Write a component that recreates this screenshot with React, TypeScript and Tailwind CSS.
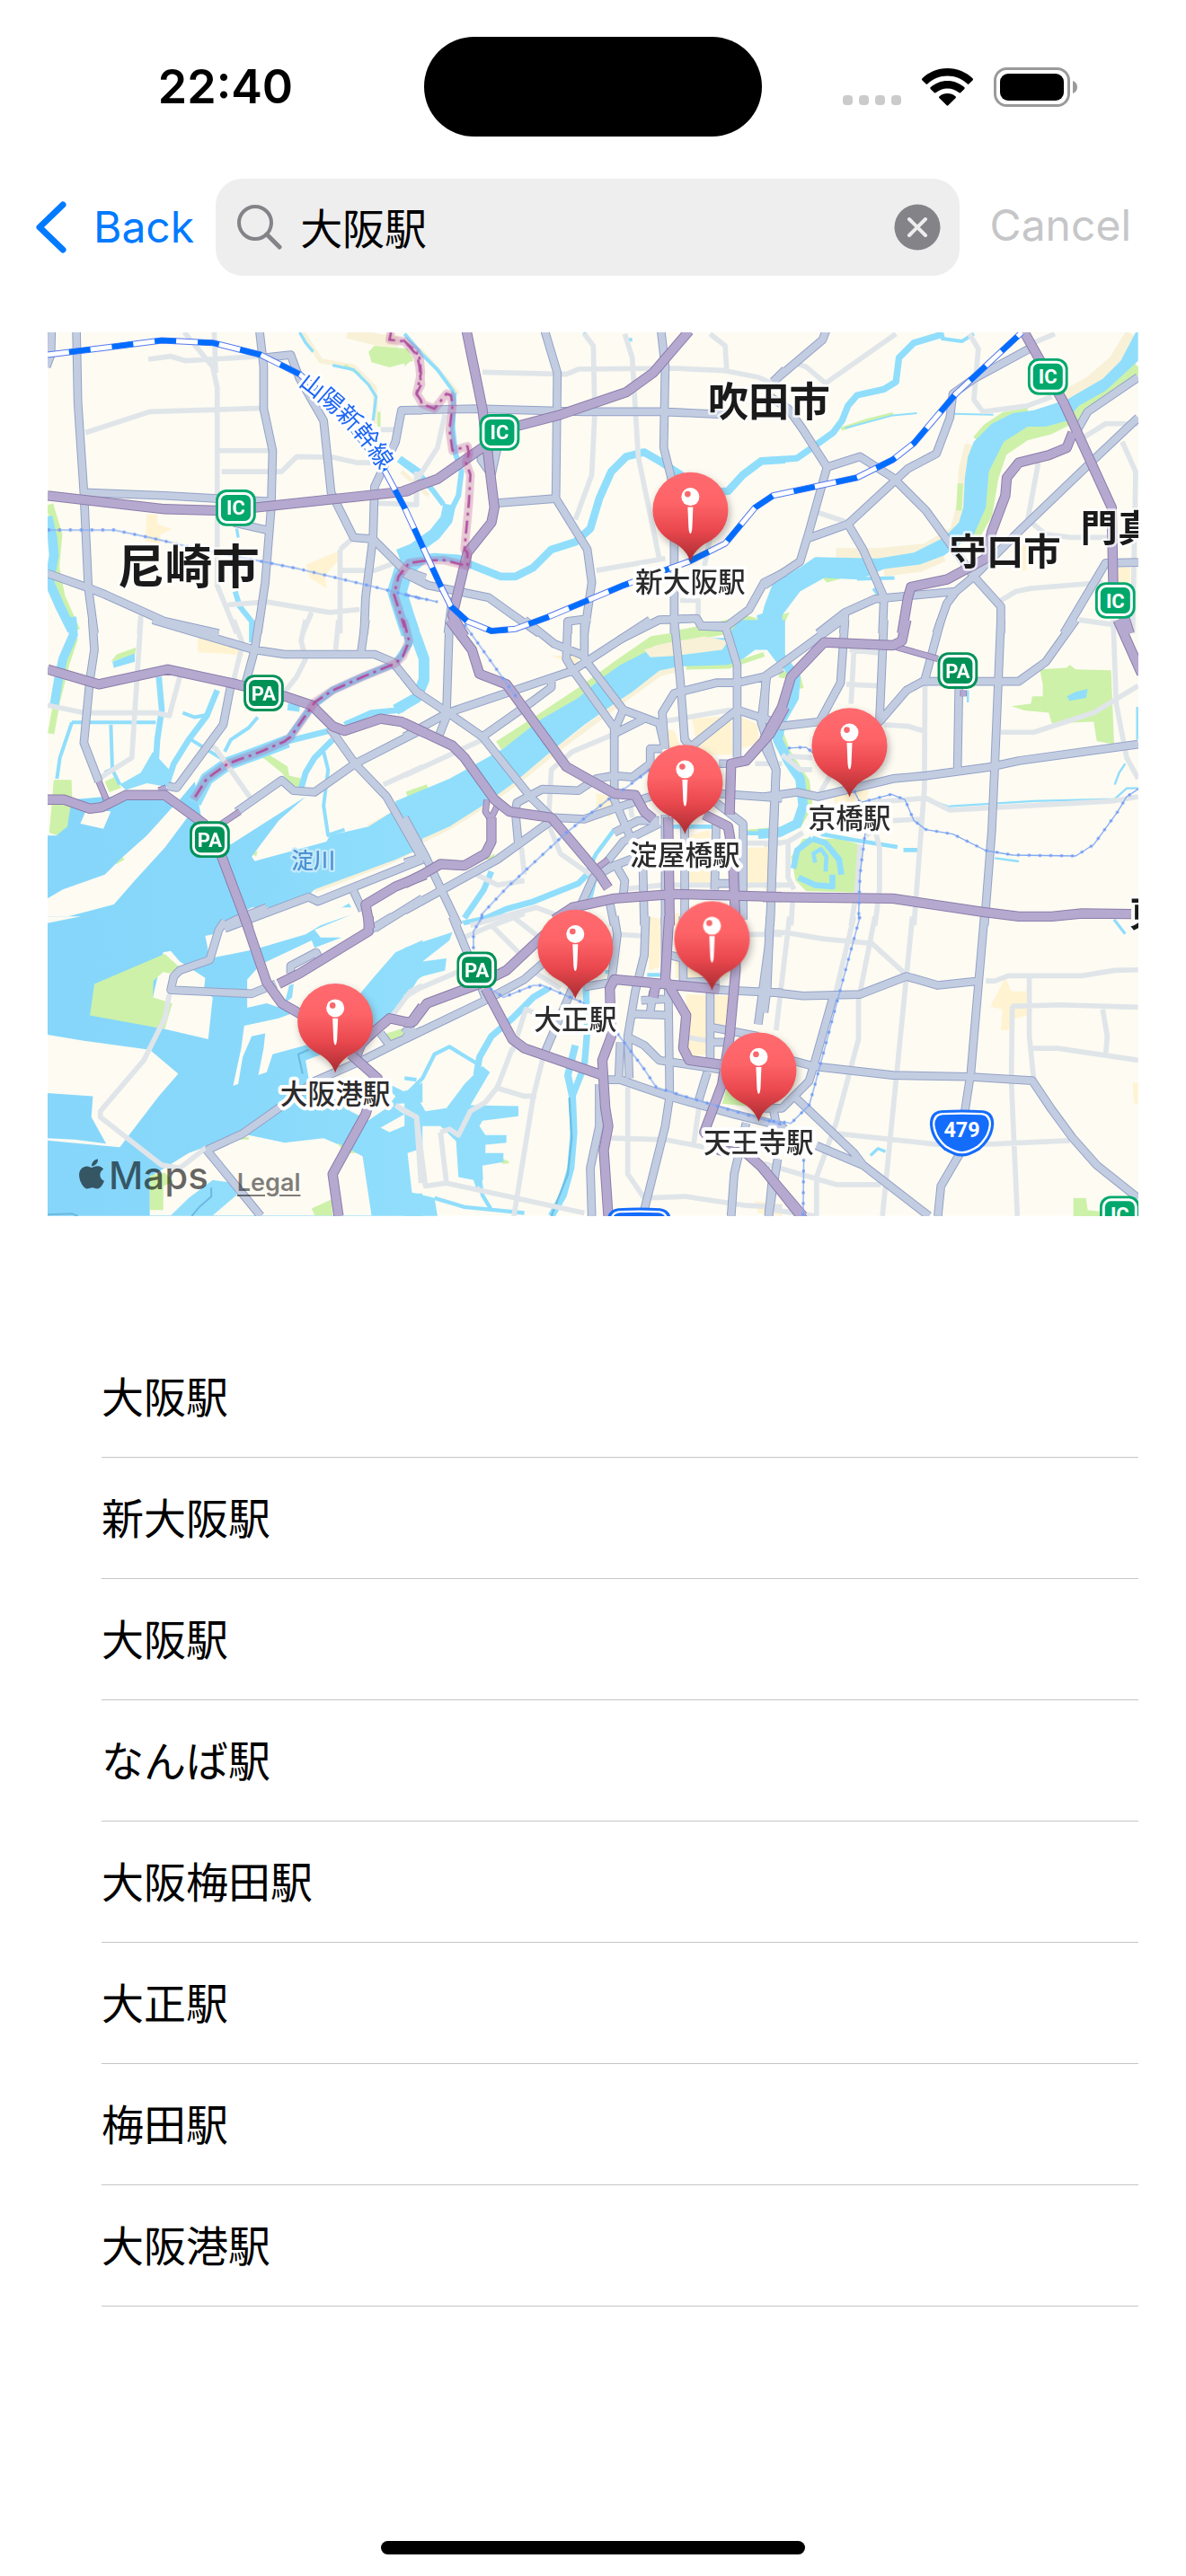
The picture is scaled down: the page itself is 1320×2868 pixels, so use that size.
import React from "react";
import { FaApple } from "react-icons/fa";

type Tile = "A" | "B" | "C" | "D" | "E" | "F" | "G" | "H" | "I";
type Layer = Partial<Record<Tile, string>>;
type Stroke = [tile: Tile, width: number, d: string];
type Shape = [tile: Tile, d: string];

/* The map is stored as a 3 x 3 set of tiles, each with its own origin. */
const origin: Record<Tile, string> = {
  A: "translate(0 0)",
  B: "translate(1200 0)",
  C: "translate(2400 0)",
  D: "translate(0 975)",
  E: "translate(1200 975)",
  F: "translate(2400 975)",
  G: "translate(0 1965)",
  H: "translate(1200 1965)",
  I: "translate(2400 1965)",
};

const WATER = "#90defc";
const LAND = "#fdfbf2";
const GREEN = "#cdf1a9";
const SAND = "#f8f1d8";
const TOWN = "#fff3d2";

const towns: Shape[] = [
  ["A", "M340 622 375 622 375 655 425 672 385 690 385 720 335 712Z"],
  ["A", "M870 790 920 770 980 745 985 770 935 825 940 870 885 835Z"],
  ["D", "M510 60 560 60 650 100 665 120 590 112 510 108Z"],
  ["E", "M960 330 1090 320 1095 450 980 450Z M1120 320 1180 350 1180 410 1125 430Z M490 120 590 118 570 150Z"],
  ["E", "M840 360 900 370 920 420 880 430Z M640 580 690 590 690 660 640 640Z M950 720 1020 700 1030 880 950 880Z M1140 760 1210 760 1210 880 1140 900Z"],
  ["F", "M230 590 300 565 350 570 340 610 240 620Z M0 750 40 760 40 900 0 900Z"],
  ["H", "M815 0 860 10 850 170 815 180Z M940 260 1085 265 1070 370 1030 380 1010 460 940 470Z M900 -10 1000 -10 1080 200 905 205Z"],
  ["I", "M805 205 825 250 880 250 880 330 820 345 820 380 790 380 795 310 755 300Z M1230 555 1248 555 1248 625 1235 625Z"],
  ["C", "M1178 800 1222 800 1222 850 1178 850Z M860 725 875 725 875 810 860 810Z"],
  ["H", "M1170 950 1260 960 1260 1000 1180 990Z"],
];

const banks: [Tile, string, number, string][] = [
  ["A", SAND, 16, "M860 15 920 110 1030 130 1100 200 1105 320"],
  ["A", SAND, 40, "M1010 15 1110 40 1180 45"],
  ["A", GREEN, 10, "M1000 125 1050 155 M1115 280 1115 330"],
  ["A", GREEN, 26, "M15 590 45 690 35 800 55 900 105 1010"],
  ["B", SAND, 14, "M50 70 120 150 180 220 M-10 480 80 560"],
  ["C", SAND, 40, "M1225 20 1170 110 1090 180 1000 230 M690 390 670 470 660 600 640 680 540 740 380 755 240 755"],
  ["C", GREEN, 44, "M1248 130 1150 220 1040 290 950 335 870 355 790 410 760 500 740 620 700 690"],
  ["C", GREEN, 18, "M880 275 800 290 740 330 705 370 M655 520 650 610"],
  ["C", SAND, 30, "M400 815 520 800 600 765"],
  ["C", GREEN, 12, "M258 338 340 310 430 288"],
  ["D", GREEN, 22, "M100 60 70 150 40 270 20 380"],
  ["E", GREEN, 34, "M10 590 80 565 M315 420 440 340 590 240 700 160 830 70 1000 45 1120 20"],
  ["E", SAND, 18, "M0 765 150 690 280 610 370 545 500 440 720 275 850 180 930 160"],
  ["E", GREEN, 16, "M940 158 1080 155 1200 115"],
  ["D", SAND, 12, "M1260 755 1150 810 900 905 M1260 590 1080 690"],
  ["F", GREEN, 24, "M20 20 60 0 M50 180 110 190 120 230 M50 370 75 440 140 540 150 620 110 690"],
];

const greens: Shape[] = [
  ["A", "M1080 80 1100 60 1210 70 1230 110 1150 132 1090 115Z"],
  ["B", "M0 75 30 100 0 130Z"],
  ["B", "M910 1010 960 1000 1140 960 1180 970 1120 1020 900 1020Z"],
  ["C", "M190 830 220 820 265 835 210 850Z M30 1010 50 960 85 950 60 1000Z"],
  ["D", "M30 535 88 535 90 590 75 690 40 718 15 710Z M200 540 230 525 255 560 215 575Z M220 800 250 780 265 800 240 815Z"],
  ["D", "M220 140 240 115 305 92 300 115Z M715 450 740 445 810 490 815 520 860 530 850 560 820 550 790 510Z M690 780 710 770 705 790Z"],
  ["F", "M130 730 250 730 320 750 305 910 140 905 105 870 90 790Z"],
  ["F", "M920 165 1010 160 1020 150 1040 165 1158 168 1168 415 1110 405 1100 340 960 345 950 310 870 302 825 288 890 280 895 255 930 255 930 215Z"],
  ["H", "M1075 570 1140 590 1200 640 1060 625Z M325 808 350 818 345 825 325 825Z M0 380 20 360 0 335Z"],
  ["I", "M1032 940 1074 940 1080 980 1120 985 1120 1001 1032 1001Z"],
  ["E", "M270 800 300 780 300 800Z M1140 700 1260 690 1260 705 1140 715Z"],
];

const riverShapes: Shape[] = [
  ["C", "M1240 15 1190 110 1130 170 1010 240 900 275 830 285 760 320 700 380 680 430 670 500 665 600 650 650 600 700 500 750 380 770 170 765 120 800 30 850 0 930 -20 1020 20 1020 60 960 120 880 200 835 320 840 400 805 520 790 600 760 700 690 740 600 750 480 800 380 880 330 940 330 1010 310 1050 260 1140 210 1248 110 1248 15Z"],
  ["B", "M1260 840 1220 900 1200 960 1140 1000 1110 1020 1260 1020Z"],
  ["E", "M1120 0 1070 60 1000 60 960 70 860 80 800 110 720 150 650 200 580 260 450 335 330 430 240 480 150 530 -30 605 -30 770 150 690 260 620 370 540 500 430 600 350 700 280 760 240 850 170 920 155 1080 150 1130 130 1170 100 1210 100 1240 140 1270 160 1270 0Z"],
  ["D", "M225 140 300 112 300 140 230 160Z M360 440 415 500 425 560 340 545 270 568 250 550 320 510Z"],
];

const bayShapes: Shape[] = [
  ["D", "M9 720 40 720 90 600 200 590 390 600 430 620 340 720 250 800 200 850 60 900 9 930Z"],
  ["D", "M500 540 520 650 620 750 870 590 780 670 720 750 690 790 700 805 940 740 950 720 1080 690 1160 640 1260 590 1260 760 1170 800 900 900 880 920 700 1000 700 1040 9 1040 9 1008 230 950 300 870 400 760 490 640 450 600Z"],
];

const waterLines: Stroke[] = [
  ["A", 32, "M9 630 25 700 30 760 15 850 50 930 90 1010"],
  ["A", 10, "M850 15 870 50 895 80 M960 125 1030 140 1080 190 1105 230 1095 310 M640 670 645 700 M630 790 625 820"],
  ["A", 18, "M1185 435 1250 480 M635 880 650 930 690 980 690 1050"],
  ["A", 64, "M1270 745 1200 800 1175 880 1200 960 1220 1020"],
  ["B", 12, "M0 20 60 90 110 140 165 215 M600 15 605 25 M740 40 760 40"],
  ["B", 18, "M-20 440 60 500 100 550 130 590 M165 215 160 330 170 420 190 480 180 560 160 600"],
  ["B", 42, "M150 590 140 640 100 690 30 740 -20 760"],
  ["B", 26, "M0 780 100 765 180 770 220 790 320 830 370 830 430 800 490 740 570 715 620 670 650 570 690 480 740 430 800 415 860 450 920 490 1000 550 1080 545 1130 490 1190 445 1270 440"],
  ["C", 22, "M-10 445 110 435 160 400 230 350 260 310 280 260 310 225 400 205 440 180 450 100 500 50 600 20"],
  ["C", 12, "M590 35 660 45 700 20 M310 838 435 835 M365 870 380 890"],
  ["C", 6, "M270 335 430 292 510 285 M630 287 765 290"],
  ["D", 30, "M90 -10 95 50 60 130 45 200 30 290"],
  ["D", 20, "M380 190 390 300 375 400 370 480 M575 235 540 320 480 400 430 480 410 540 M1000 350 1090 310 1190 300 1240 260 M810 405 950 370 M960 400 900 460 870 510 850 580 M1020 955 940 1000 880 1020"],
  ["D", 12, "M220 350 225 500 250 550 M90 342 370 342 M90 342 50 460 40 530 M710 325 680 360 620 400 600 440 M480 395 600 470 M460 310 500 325 550 315 M930 440 945 500 930 620 945 720 M690 0 690 40 M200 510 240 490 M940 720 1000 700"],
  ["D", 44, "M500 610 540 530 610 480 720 440 810 405"],
  ["D", 24, "M810 400 890 290 960 235 1060 190 1170 145 1215 80 1195 -10 M810 290 850 295"],
  ["E", 36, "M10 -10 40 60 65 130 65 200 40 260 -30 300"],
  ["E", 20, "M290 840 265 900 200 995 M620 840 580 880 430 940 340 965 240 1010"],
  ["E", 14, "M700 700 640 780 600 860 M640 850 620 930 M1130 712 1260 712 M880 690 1040 690"],
  ["F", 32, "M-10 -20 20 70 60 130 105 190 100 260 60 330 45 400 80 470 120 530 130 620 110 680 50 710 -20 715"],
  ["F", 20, "M160 730 110 770 98 830 M160 730 205 745 250 800 258 850 M115 860 170 885 228 890 228 850"],
  ["F", 14, "M170 810 165 780 190 765 208 790 205 840 M190 715 300 735 445 758 M465 768 515 768"],
  ["F", 7, "M550 600 620 625 M620 622 900 605 1170 598 1210 562 1248 562 M1205 480 1185 510 1170 550 M1245 290 1245 400 M770 795 850 806 M680 235 680 275"],
  ["I", 10, "M1168 10 1205 58 M355 798 380 775 405 785"],
];

const harbour =
  "M9 0 680 0 1000 -10 1260 -10 1260 1000 9 1000Z";

const harbourLand: Shape[] = [
  ["G", "M9 0 120 0 9 22Z"],
  ["G", "M535 65 560 60 600 20 690 -30 1100 -30 990 5 920 30 870 60 700 110 550 140Z"],
  ["G", "M675 210 720 160 890 80 900 105 990 70 920 70 900 45 1080 -30 1270 -30 1270 75 1170 120 1100 200 1050 260 860 330 740 290 675 305Z"],
  ["G", "M665 365 780 340 860 310 1050 260 1000 400 870 430 760 460 740 520 712 530 730 440 735 390 690 400 660 470 645 560 628 565 655 440Z"],
  ["G", "M395 120 420 115 450 150 535 205 530 250 560 270 545 410 375 370 360 270Z"],
  ["G", "M9 395 130 415 350 445 445 525 380 600 250 770 205 760 155 670 160 600 9 590Z M9 740 100 745 250 764 250 770 9 748Z"],
  ["G", "M350 998 350 870 480 790 560 760 680 730 800 755 930 740 1000 770 1060 800 1090 998Z"],
  ["G", "M870 480 950 450 1100 400 1170 330 1270 170 1270 550 1200 585 1110 540 1170 600 1140 640 1080 680 1020 650 880 540Z"],
  ["G", "M1120 705 1200 660 1170 640 1180 625 1270 620 1270 670 1150 720Z M1210 790 1270 770 1270 925 1225 925Z"],
];

const harbourWater: Shape[] = [
  ["G", "M560 880 630 890 640 930 560 998 420 998 480 940Z M815 230 830 225 825 270 800 290Z"],
  ["H", "M0 105 160 52 150 80 60 150 140 140 135 180 60 200 0 240Z M190 15 280 -5 285 10 200 30Z"],
  ["H", "M0 580 40 600 70 650 140 640 200 560 260 500 285 520 220 630 380 633 380 667 260 682 250 700 270 730 340 730 340 755 270 762 270 790 330 790 330 820 260 832 262 880 240 910 230 880 180 870 172 750 120 700 50 700 60 750 0 790Z"],
  ["H", "M0 790 20 920 100 940 110 1000 0 1000Z"],
];

const harbourLines: Stroke[] = [
  ["H", 22, "M480 240 430 270 360 340 290 400 250 470 240 530 M605 230 610 380 600 500 560 600"],
  ["H", 13, "M0 600 60 540 100 460 150 435 240 490 M0 540 40 545 M100 940 200 970 300 980 400 990 M250 870 260 930 290 980 M670 185 700 185 M810 195 860 195"],
  ["H", 24, "M570 430 545 530 560 600 565 720 555 840 530 930 490 1000"],
];

const minor: Layer = {
  A: "M345 105 420 95 470 110 720 95 M465 15 560 130 575 200 575 860 640 1020 M565 15 570 150 M135 350 350 280 730 268 M580 410 750 410 M590 480 790 480 840 430 960 432 1040 450 1110 450 M985 740 985 1020 M990 810 1100 810 1180 780 M610 925 740 915 950 950 1050 940 M890 950 860 1020 M320 960 315 1020 M1240 480 1240 590 1100 585 M1030 700 985 740 M1120 340 1170 340",
  B: "M260 148 540 155 580 138 900 135 1070 143 1180 165 1260 200 M600 20 630 60 635 280 625 490 570 640 M735 20 760 100 780 430 850 770 M640 810 870 770 M1020 20 1070 60 1075 140 M135 290 110 400 40 510 40 590 0 590 M920 910 980 910 980 970 M1020 700 1000 800",
  C: "M110 120 140 130 205 185 440 20 M685 20 715 70 700 240 730 280 880 260 960 230 M900 50 970 20 M915 450 880 640 940 690 1030 700 1150 700 M1060 370 1140 320 1248 320 M1195 380 1240 480 1230 1020 M790 910 840 880 890 870 1130 850 M160 610 280 650 M1050 975 1160 990",
  D: "M320 0 290 460 180 530 M9 285 130 310 370 310 415 320 450 190 M630 0 660 80 630 200 M870 0 855 70 870 130 840 190 800 240 M980 0 970 100 M540 410 570 430 690 600 M1130 550 1260 490",
  E: "M0 520 260 400 M690 385 560 440 490 500 480 680 520 780 620 850 M860 340 1090 300 M240 850 310 885 400 870 M220 1020 440 960 520 990 M390 760 400 850 M720 900 860 885 1260 885 M1260 745 1140 745 M1170 480 1260 480 M750 600 760 660",
  F: "M300 100 290 280 M275 215 380 220 M285 100 380 110 M400 350 480 355 530 370 M537 210 535 560 500 1020 M790 375 900 375 1100 310 1248 220 M1165 0 1175 280 1210 460 1248 530 M60 450 120 500 160 500 M80 455 160 460 M340 610 540 595 620 635 1160 605 1248 590 M430 670 520 665 M0 750 80 740 130 710 M80 740 80 860 100 900 M0 885 100 885 M320 750 310 900 290 1020 M340 720 370 700 385 760 385 900 370 1020 M95 940 90 1020 M180 590 220 520 260 400",
  G: "M415 260 400 340 330 480 185 650 185 670 390 830 450 840 540 770 M1160 330 1220 250 1260 230 M1170 630 1240 670 1255 890",
  H: "M0 650 40 670 70 900 140 890 370 940 600 990 M120 720 140 890 M120 720 150 710 180 730 220 650 270 620 310 570 360 440 M300 570 400 600 440 600 M430 320 405 310 360 450 M470 440 430 600 365 1000 M0 270 50 240 260 150 M200 70 280 35 400 -10 M290 30 400 140 M360 0 450 70 M690 740 870 745 1000 770 M745 570 745 860 800 940 940 935 1140 965 1260 970 M985 620 965 760 M710 60 800 65 M925 400 1010 415 M1130 60 1260 60 M440 190 520 240",
  I: "M85 0 40 380 M0 50 80 55 200 75 360 90 475 195 M300 0 240 250 M370 0 315 280 315 410 240 690 175 870 175 1000 M495 0 395 1000 M740 215 770 215 815 198 1060 198 1170 180 1248 178 M885 200 885 400 900 545 M825 300 985 295 1248 303 M828 300 825 550 845 1000 M1130 310 1145 400 1140 460 M895 440 980 440 1248 480 M245 725 570 760 750 760 1020 748 M0 825 240 895 390 895 M0 975 170 1000",
};

const main: Layer = {
  A: "M105 0 110 250 120 400 130 550 145 870 165 1020 M22 0 20 90 5 130 M9 820 150 870 200 890 400 980 580 1020 M715 0 730 130 730 270 760 410 755 600 735 850 710 1020 M130 550 400 560 750 580 M730 100 820 90 850 170 930 310 955 550 1030 700 1095 705 1200 810 1270 835 M1260 275 1190 275 1170 380 1100 530 1095 700 1070 900 1065 1020 M630 650 740 675",
  B: "M0 275 240 270 600 280 860 280 1080 290 M465 0 510 150 505 570 610 740 625 850 600 1020 M310 585 500 570 M855 0 870 130 865 400 890 500 900 700 900 1020 M0 820 80 860 280 900 350 950 450 1020 M160 900 145 1020 M720 1040 850 975 975 970 990 995 1070 1000 1150 940 1200 850 1270 815 M545 1020 545 980 620 970 M265 400 255 440 290 490 M310 400 290 490 M1270 140 1230 180",
  C: "M210 0 195 40 30 180 M20 230 80 270 130 340 210 465 150 680 120 780 0 860 M210 465 320 430 430 500 540 610 700 830 790 930 790 1020 M1248 165 1080 280 1040 350 M885 70 700 170 630 220 620 300 575 420 480 470 280 655 140 705 M280 655 330 740 400 900 395 1020 M180 1020 270 950 370 905 640 880 700 830 850 680 1100 440 1248 300 M270 950 265 1020 M640 880 610 920 575 1020 M1248 783 1140 785 1000 1020",
  D: "M158 0 165 100 150 200 130 410 180 540 M360 0 700 100 800 115 1100 115 1160 140 1240 240 1260 250 M715 0 700 100 670 210 M620 220 595 350 440 560 410 555 M950 360 1035 480 1140 590 1260 800 M1070 0 1055 110 M1260 365 1035 480 900 575 830 570 790 535 640 640 M1260 800 910 940 880 925 600 1030 M1030 905 1060 970 M1100 1030 1260 930",
  E: "M150 0 140 310 M0 390 145 310 560 170 820 0 M0 190 40 240 145 310 260 390 420 590 490 660 M145 310 110 400 M400 0 500 80 600 120 M545 0 540 130 560 165 700 360 700 600 760 740 M600 0 600 130 730 300 850 345 870 430 M700 380 800 330 M730 300 700 370 M260 390 430 270 490 225 490 200 M900 0 920 200 935 400 960 430 M980 20 1070 20 1110 150 1110 460 M1260 160 1200 190 1110 210 1040 210 900 245 860 310 870 430 M960 420 1110 300 1260 350 M1210 180 1190 340 1240 500 1230 700 1220 1020 M370 640 375 610 460 565 580 570 640 530 700 520 760 525 820 480 820 430 860 430 M500 660 600 665 700 630 850 580 M370 640 380 750 M490 670 310 800 0 970 M0 660 70 790 180 1020 M0 810 70 790 M1050 480 1100 480 M1050 580 1260 595 M1040 610 1130 680 1130 1000 M585 960 630 860 700 820 830 770 M650 840 730 740 850 680 M700 710 780 670 850 670 M700 810 735 870 730 920 M680 920 700 1020 M795 800 800 1020 M870 650 870 1020 M935 680 935 1020 M1040 680 1035 900 M1040 880 1090 880",
  F: "M260 0 0 190 M270 0 255 210 185 340 50 355 M0 330 5 200 M400 0 385 340 475 235 530 205 850 205 940 140 1040 0 M590 0 535 205 M650 230 645 510 M790 0 770 480 760 700 735 1020 M0 590 110 575 180 590 430 530 540 520 760 490 850 470 1248 415 M0 420 40 500 30 770 20 1020",
  G: "M600 15 580 45 550 145 450 180 430 200 420 245 690 258 770 225 M740 -30 640 10 600 30 M1160 0 1060 60 M820 190 820 165 905 120 915 140 M540 780 660 725 780 640 900 550 1060 480 1260 380 M540 780 720 1000 M1120 390 1150 430 1200 410 1230 370",
  H: "M160 0 270 270 M0 410 270 280 400 210 480 140 M0 390 30 350 M700 0 710 60 690 220 600 235 M560 240 470 450 M805 0 800 130 770 250 745 400 750 540 M870 0 870 200 M930 0 930 220 1050 215 M720 420 715 540 M740 400 800 430 850 480 1050 510 M650 545 720 545 880 600 1100 660 1260 700 M880 230 885 600 870 700 800 980 M760 325 880 330 M880 275 790 280 M830 250 820 320 M1020 250 1020 490 M1050 245 1260 255 M1220 0 1215 100 1180 360 M1010 520 980 620 M650 560 650 700 620 840 625 1000 M1140 690 1100 860 1090 1000 M1230 850 1215 1000 M1025 370 1180 400 M1025 420 1080 420 M890 130 930 140",
  I: "M20 0 10 240 0 320 M735 0 715 230 690 520 670 650 M0 250 130 265 320 260 475 200 580 230 720 215 M230 270 165 500 150 550 100 600 60 640 0 640 M90 480 165 500 430 530 680 535 895 548 960 645 1030 740 1110 830 1248 940 M100 600 300 790 330 830 550 1000 M175 765 330 830 M660 780 590 900 580 1000 M45 810 15 1000 M30 640 40 690 70 710",
};

const highway: Layer = {
  A: "M9 560 400 605 570 610 700 600 1210 545 1260 520",
  B: "M-5 545 110 505 260 400 330 340 520 290 740 215 830 150 950 10 M205 0 260 270 300 600 290 650 210 750 160 960 200 1030",
  C: "M860 0 1000 250 1160 600 1165 850 1220 1020 M1030 350 1010 400 950 425 850 450 810 500 805 560 760 680 740 770 610 840 490 865 480 900 460 1020",
  D: "M9 165 180 215 410 165 640 215 800 255 890 285 960 355 1000 370 1120 330 1190 340 1270 378 M9 600 65 600 150 630 190 625 270 585 400 585 530 680 590 790 680 1030 M1270 850 1170 890 1070 950 1085 1030",
  E: "M0 345 160 420 200 460 300 600 350 640 490 660 650 850 680 895 M150 0 225 100 250 180 340 215 540 490 700 580 770 585 800 640 830 665 M0 880 60 850 120 815 200 820 270 780 290 740 290 660 M500 1000 560 960 700 930 900 915 1260 925 M880 660 885 1020 M1000 650 1080 690 1095 780 1105 1020 M1085 650 1090 480 1140 470 1220 380 1270 290",
  F: "M0 400 60 290 90 190 200 75 430 85 460 70 475 0 M-5 925 430 930 730 975 850 990 960 990 1060 980 1225 982 M1180 0 1260 180",
  G: "M665 0 740 220 790 290 860 330 M780 225 850 190 1080 50 1080 0 M1080 400 1150 340 1220 355 1260 300 M1020 460 1110 540 1070 660 960 860 980 1000",
  H: "M0 355 30 350 75 290 250 225 340 180 500 30 M270 240 360 410 400 440 660 530 M883 0 870 210 940 330 930 440 950 480 1060 495 M1050 243 700 210 685 240 690 400 660 480 670 640 680 700 665 780 680 1000 M1105 0 1105 180 1085 400 1060 560 1000 720 1050 780 1140 790 1190 835 1330 1000 M840 220 830 270",
  I: "M0 845 130 1010",
};

const ramps: Layer = {
  D: "M180 540 205 600 M590 680 650 640 M380 570 405 560",
  E: "M275 600 270 640 290 670 M310 620 290 660 M640 830 680 800",
  F: "M440 90 580 130 M665 235 665 255",
  G: "M1040 480 1060 430 1100 390",
};

const border: Layer = {
  A: "M1155 15 1150 40 1200 45 1250 100 1255 150 1240 220 1260 250 M1270 777 1215 785 1180 830 1165 890 1200 1000",
  B: "M-5 40 40 80 50 130 55 190 40 220 60 255 100 270 140 220 155 225 160 260 150 340 160 410 210 395 215 420 205 450 220 490 215 580 200 740 210 750 210 795 130 775 70 777",
  D: "M1197 0 1215 70 1195 120 1170 145 1060 190 960 235 900 275 820 390 800 405 720 440 610 480 540 530 495 600",
};

const rail: Layer = {
  A: "M9 675 230 675 350 700 520 740 700 775 850 805 1080 860 1260 905",
  B: "M0 890 110 915",
  E: "M200 15 375 260 M820 500 725 570 M685 595 540 710 340 895 260 980 250 1010",
  F: "M80 428 140 425 170 450 M300 570 320 610 425 582 470 600 500 670 540 700 630 715 740 770 830 785 1040 788 1100 750 1180 640 1210 590 1248 565 M340 690 320 850 315 1000",
  H: "M260 0 230 50 230 110 M285 240 330 270 430 230 460 230 600 290 M710 390 800 510 840 570 950 605 1100 650 1260 695",
  I: "M320 0 250 260 170 560 150 630 90 690 0 680 M132 810 130 1000",
};

const shinkansen =
  "M9 90 210 65 390 42 560 50 720 90 850 155 950 240 1130 470 1200 600 1260 730 1320 860 1355 930 1410 980 1490 1012 1570 1005 1680 965 1930 860 2150 780 2270 720 2370 600 2430 560 2710 500 2830 440 2900 385 3040 220 3260 15";

const pins: { x: number; y: number; label: string }[] = [
  { x: 2154, y: 608, label: "新大阪駅" },
  { x: 2685, y: 1395, label: "京橋駅" },
  { x: 2136, y: 1518, label: "淀屋橋駅" },
  { x: 2226, y: 2040, label: "" },
  { x: 1770, y: 2068, label: "大正駅" },
  { x: 969, y: 2315, label: "大阪港駅" },
  { x: 2382, y: 2478, label: "天王寺駅" },
];

const badges: { x: number; y: number; text: "IC" | "PA" }[] = [
  { x: 637, y: 601, text: "IC" },
  { x: 1517, y: 349, text: "IC" },
  { x: 3347, y: 163, text: "IC" },
  { x: 3572, y: 910, text: "IC" },
  { x: 3587, y: 2959, text: "IC" },
  { x: 730, y: 1219, text: "PA" },
  { x: 550, y: 1708, text: "PA" },
  { x: 3046, y: 1144, text: "PA" },
  { x: 1441, y: 2143, text: "PA" },
];

const cities = [
  { x: 242, y: 855, size: 158, name: "尼崎市" },
  { x: 2212, y: 298, size: 136, name: "吹田市" },
  { x: 3018, y: 793, size: 124, name: "守口市" },
  { x: 3456, y: 714, size: 124, name: "門真" },
  { x: 3620, y: 2000, size: 124, name: "東" },
];

const stations = [
  "大阪駅",
  "新大阪駅",
  "大阪駅",
  "なんば駅",
  "大阪梅田駅",
  "大正駅",
  "梅田駅",
  "大阪港駅",
];

function Lines({ layer, color, width, dash }: { layer: Layer; color: string; width: number; dash?: string }) {
  return (
    <g fill="none" stroke={color} strokeWidth={width} strokeLinejoin="round" strokeDasharray={dash}>
      {(Object.keys(layer) as Tile[]).map((t) => (
        <path key={t} transform={origin[t]} d={layer[t]} />
      ))}
    </g>
  );
}

function Strokes({ items, color }: { items: Stroke[]; color: string }) {
  return (
    <g fill="none" stroke={color} strokeLinejoin="round">
      {items.map(([t, w, d], i) => (
        <path key={i} transform={origin[t]} strokeWidth={w} d={d} />
      ))}
    </g>
  );
}

function Shapes({ items, color }: { items: Shape[]; color: string }) {
  return (
    <g fill={color}>
      {items.map(([t, d], i) => (
        <path key={i} transform={origin[t]} d={d} />
      ))}
    </g>
  );
}

function Badge({ x, y, text }: { x: number; y: number; text: "IC" | "PA" }) {
  const color = text === "IC" ? "#00a86b" : "#009157";
  return (
    <g transform={`translate(${x} ${y})`}>
      <rect x={-67} y={-61} width={134} height={122} rx={36} fill={color} />
      <rect x={-54} y={-48} width={108} height={96} rx={24} fill="none" stroke="#fff" strokeWidth={9} />
      <text y={24} textAnchor="middle" fontSize={66} fontWeight={700} fill="#fff" fontFamily="Roboto, sans-serif">
        {text}
      </text>
    </g>
  );
}

function Pin({ x, y, label }: { x: number; y: number; label: string }) {
  const shape =
    "M0 172 C-8 148 -26 124 -58 108 C-100 86 -126 48 -126 0 A126 126 0 0 1 126 0 C126 48 100 86 58 108 C26 124 8 148 0 172Z";
  return (
    <g transform={`translate(${x} ${y})`}>
      <path d={shape} fill="#3b3b3b" opacity={0.35} filter="url(#soft)" transform="translate(6 12)" />
      <path d={shape} fill="url(#pin)" />
      <path d="M-9 -10 H9 L6 60 Q4 79 0 79 Q-4 79 -6 60Z" fill="#fff" />
      <circle cy={-44} r={30} fill="#fff" />
      <circle cx={-9} cy={-53} r={10} fill="#f8686c" />
      {label && (
        <text
          y={275}
          textAnchor="middle"
          fontSize={92}
          fontWeight={500}
          fill="#2b2b2b"
          stroke="#fff"
          strokeWidth={24}
          strokeLinejoin="round"
          paintOrder="stroke"
        >
          {label}
        </text>
      )}
    </g>
  );
}

function Shield({ x, y, text }: { x: number; y: number; text?: string }) {
  return (
    <g transform={`translate(${x} ${y})`}>
      <path
        d="M-70 -76 Q0 -80 70 -76 Q107 -72 107 -30 Q104 20 60 56 Q25 78 0 78 Q-25 78 -60 56 Q-104 20 -107 -30 Q-107 -72 -70 -76Z"
        fill="#146cfb"
      />
      <path
        d="M-66 -64 Q0 -67 66 -64 Q94 -61 94 -28 Q90 14 53 45 Q22 65 0 65 Q-22 65 -53 45 Q-90 14 -94 -28 Q-94 -61 -66 -64Z"
        fill="none"
        stroke="#fff"
        strokeWidth={7}
      />
      {text && (
        <text y={15} textAnchor="middle" fontSize={70} fontWeight={700} fill="#fff" fontFamily="Roboto, sans-serif">
          {text}
        </text>
      )}
    </g>
  );
}

function OsakaMap() {
  return (
    <svg
      viewBox="9 15 3640 2949"
      className="block h-auto w-full"
      role="img"
      aria-label="大阪の地図"
      fontFamily='"Noto Sans CJK JP", sans-serif'
    >
      <defs>
        <linearGradient id="pin" x1="0" y1="0" x2="0" y2="1">
          <stop offset="0" stopColor="#ff6b70" />
          <stop offset="0.35" stopColor="#fd6367" />
          <stop offset="0.65" stopColor="#e9484e" />
          <stop offset="1" stopColor="#a82c31" />
        </linearGradient>
        <linearGradient id="bay" gradientUnits="userSpaceOnUse" x1="9" y1="0" x2="1200" y2="0">
          <stop offset="0" stopColor="#86d6fb" />
          <stop offset="0.5" stopColor="#88d8fb" />
          <stop offset="1" stopColor="#90defc" />
        </linearGradient>
        <filter id="soft" x="-30%" y="-30%" width="160%" height="160%">
          <feGaussianBlur stdDeviation="12" />
        </filter>
        <path id="line-name" d="M845 189 C930 255 1040 340 1130 495" />
      </defs>
      <rect x={9} y={15} width={3640} height={2949} fill={LAND} />
      <Shapes items={towns} color={TOWN} />
      {banks.map(([t, color, w, d], i) => (
        <path key={i} transform={origin[t]} d={d} fill="none" stroke={color} strokeWidth={w} strokeLinejoin="round" />
      ))}
      <Shapes items={greens} color={GREEN} />
      <Shapes items={riverShapes} color={WATER} />
      <Shapes items={bayShapes} color="url(#bay)" />
      <Strokes items={waterLines} color={WATER} />
      <path transform={origin.D} d="M140 630 118 680 195 697 220 640Z" fill={LAND} />
      <path transform={origin.D} d="M30 535 88 535 90 590 75 690 40 718 15 710Z" fill={GREEN} />
      <path transform={origin.E} d="M800 100 860 80 1000 55 1080 70 1060 100 900 120 820 125Z" fill={SAND} />
      <path transform={origin.F} d="M1010 255 1040 240 1080 230 1075 260 1020 270Z" fill={WATER} />
      <path transform={origin.G} d={harbour} fill="url(#bay)" />
      <Shapes items={harbourLand} color={LAND} />
      <path
        transform={origin.G}
        d="M165 225 400 125 450 170 415 190 395 185 362 215 360 270 425 290 400 375 380 372 150 330Z M1140 390 1205 370 1190 400 1150 415Z M350 865 400 855 430 885 395 900 395 980 350 980Z M975 755 1040 790 1000 790Z M890 975 955 945 960 998 900 998Z M640 745 680 735 680 745Z"
        fill={GREEN}
      />
      <Shapes items={harbourWater} color={WATER} />
      <Strokes items={harbourLines} color={WATER} />
      <path transform={origin.G} d="M860 525 845 460 880 445 M490 1000 515 970 555 935 555 905 M9 995 90 992 110 1000" fill="none" stroke="#6bb9e0" strokeWidth={6} />
      <path transform={origin.H} d="M550 605 558 740 545 860 490 1000" fill="none" stroke="#6dbfe6" strokeWidth={7} />

      <Lines layer={minor} color="#e0e5e9" width={17} />
      <Lines layer={main} color="#94a2c6" width={29} />
      <Lines layer={main} color="#c3cde2" width={23} />
      <Lines layer={ramps} color="#8c7caa" width={22} />
      <Lines layer={ramps} color="#b5a9d0" width={17} />
      <Lines layer={highway} color="#8c7caa" width={34} />
      <Lines layer={highway} color="#b5a9d0" width={28} />
      <g opacity={0.28}>
        <Lines layer={border} color="#b04a90" width={28} />
      </g>
      <Lines layer={border} color="#b0509f" width={8} dash="44 16 10 16" />
      <Lines layer={rail} color="#86abf3" width={4} />
      <Lines layer={rail} color="#6f9bf5" width={9} dash="8 28" />
      <g fill="none" strokeLinejoin="round">
        <path d={shinkansen} stroke="#5478f0" strokeWidth={21} />
        <path d={shinkansen} stroke="#fff" strokeWidth={15} />
        <path d={shinkansen} stroke="#006dff" strokeWidth={18} strokeDasharray="72 72" strokeDashoffset={-72} />
      </g>

      <text fontSize={80} fill="#1d66f5" stroke="#fff" strokeWidth={18} strokeLinejoin="round" paintOrder="stroke">
        <textPath href="#line-name">山陽新幹線</textPath>
      </text>
      <text x={822} y={1805} fontSize={74} fontWeight={500} fill="#4c92d3" stroke="#c4e9fb" strokeWidth={14} strokeLinejoin="round" paintOrder="stroke">
        淀川
      </text>
      {badges.map((b) => (
        <Badge key={`${b.x}-${b.y}`} {...b} />
      ))}
      <Shield x={3060} y={2688} text="479" />
      <Shield x={1983} y={3015} />
      {cities.map((c) => (
        <text
          key={c.name}
          x={c.x}
          y={c.y}
          fontSize={c.size}
          fontWeight={700}
          fill="#1a1a1a"
          stroke="#ffffff"
          strokeOpacity={0.75}
          strokeWidth={16}
          strokeLinejoin="round"
          paintOrder="stroke"
        >
          {c.name}
        </text>
      ))}
      {pins.map((p) => (
        <Pin key={`${p.x}-${p.y}`} {...p} />
      ))}
    </svg>
  );
}

function StatusBar() {
  return (
    <div className="mt-[41px] grid grid-cols-[1fr_376px_1fr] items-center">
      <div className="pl-[30px] text-center text-[52px] leading-none font-semibold">22:40</div>
      <div className="h-[111px] rounded-full bg-black" />
      <div className="flex items-center justify-center gap-[23px] pr-8">
        <div className="mb-0.5 flex gap-[7px] self-end">
          {[0, 1, 2, 3].map((n) => (
            <span key={n} className="h-[11px] w-[11px] rounded-[4px] bg-[#cbcbcb]" />
          ))}
        </div>
        <svg viewBox="0 0 57 42" className="h-[42px] w-[57px]" fill="#000" aria-hidden="true">
          <path d="M28.5 0C39.500 0 49.500 4.300 56.500 11.300C57.200 12 57.200 12.700 56.500 13.400L52.600 17.200C52 17.900 51.200 17.900 50.500 17.200C44.500 11.700 37 8.600 28.500 8.600C20 8.600 12.500 11.700 6.500 17.200C5.800 17.900 5 17.900 4.400 17.200L0.500 13.400C-0.200 12.700 -0.200 12 0.500 11.300C7.500 4.300 17.500 0 28.500 0Z" />
          <path d="M28.5 14C35.700 14 42.200 16.700 47.200 21.100C47.900 21.800 47.900 22.500 47.200 23.200L43.300 27C42.600 27.700 41.900 27.700 41.200 27.100C37.800 24.200 33.400 22.500 28.500 22.500C23.600 22.500 19.200 24.200 15.800 27.100C15.100 27.700 14.400 27.700 13.700 27L9.800 23.200C9.100 22.500 9.100 21.800 9.800 21.100C14.800 16.700 21.300 14 28.500 14Z" />
          <path d="M28.5 28C31.900 28 35 29.200 37.400 31.200C38.200 31.900 38.200 32.600 37.500 33.300L29.600 41.100C28.900 41.800 28.100 41.800 27.400 41.100L19.500 33.300C18.800 32.600 18.800 31.900 19.600 31.200C22 29.200 25.100 28 28.500 28Z" />
        </svg>
        <svg viewBox="0 0 93 44" className="h-[44px] w-[93px]" aria-hidden="true">
          <rect x="1.5" y="1.5" width="82" height="41" rx="13" fill="none" stroke="#9a9a9a" strokeWidth="3" />
          <rect x="7" y="7" width="71" height="30" rx="9" fill="#000" />
          <path d="M88 15C91 16 93 18.500 93 22C93 25.500 91 28 88 29Z" fill="#9a9a9a" />
        </svg>
      </div>
    </div>
  );
}

export default function App() {
  return (
    <div className='flex min-h-screen flex-col bg-white font-["Inter","Noto_Sans_CJK_JP",sans-serif] text-black'>
      <StatusBar />

      <header className="mt-[47px] flex items-center pr-[61px] pl-[39px]">
        <button type="button" className="flex items-center gap-[30px] text-[48px] leading-none text-[#007aff]">
          <svg viewBox="0 0 35 58" className="h-[58px] w-[35px]" fill="none" stroke="currentColor" strokeWidth="7" strokeLinecap="round" strokeLinejoin="round" aria-hidden="true">
            <path d="M31 4 5 29 31 54" />
          </svg>
          Back
        </button>
        <div className="ml-6 flex h-[108px] min-w-0 flex-1 items-center rounded-[30px] bg-[#eeeeef] pr-[21px] pl-6">
          <svg viewBox="0 0 50 50" className="h-[50px] w-[50px] shrink-0" fill="none" stroke="#838388" strokeWidth="4" strokeLinecap="round" aria-hidden="true">
            <circle cx="20" cy="20" r="18" />
            <path d="M33 33 47 47" strokeWidth="5" />
          </svg>
          <input
            type="text"
            aria-label="Search"
            defaultValue="大阪駅"
            className="ml-5 h-full min-w-0 flex-1 bg-transparent pb-1 text-[47px] outline-none"
          />
          <button type="button" aria-label="Clear text" className="shrink-0">
            <svg viewBox="0 0 52 52" className="h-[52px] w-[52px]" aria-hidden="true">
              <circle cx="26" cy="26" r="25.5" fill="#838388" />
              <path d="M17 17 35 35M35 17 17 35" stroke="#eeeeef" strokeWidth="4" strokeLinecap="round" />
            </svg>
          </button>
        </div>
        <button type="button" className="ml-[34px] pb-1 text-[48px] leading-none text-[#c6c6c8]">
          Cancel
        </button>
      </header>

      <main className="mt-[63px] px-[53px]">
        <section className="relative overflow-hidden">
          <OsakaMap />
          <div className="absolute bottom-6 left-[30px] flex items-baseline text-black/60">
            <span className="flex items-center text-[42px] leading-none font-medium">
              <FaApple className="mb-1 size-[38px]" aria-hidden="true" />
              Maps
            </span>
            <a href="#legal" className="ml-8 text-[27px] leading-none font-semibold text-black/50 underline underline-offset-4">
              Legal
            </a>
          </div>
        </section>

        <ul className="mt-[134px] pl-[60px]">
          {stations.map((name, i) => (
            <li key={i} className="flex h-[135px] items-center border-b border-[#c6c6c8] pt-1 text-[47px]">
              {name}
            </li>
          ))}
        </ul>
      </main>

      <div className="mx-auto mt-auto mb-6 h-[15px] w-[472px] rounded-full bg-black" />
    </div>
  );
}
